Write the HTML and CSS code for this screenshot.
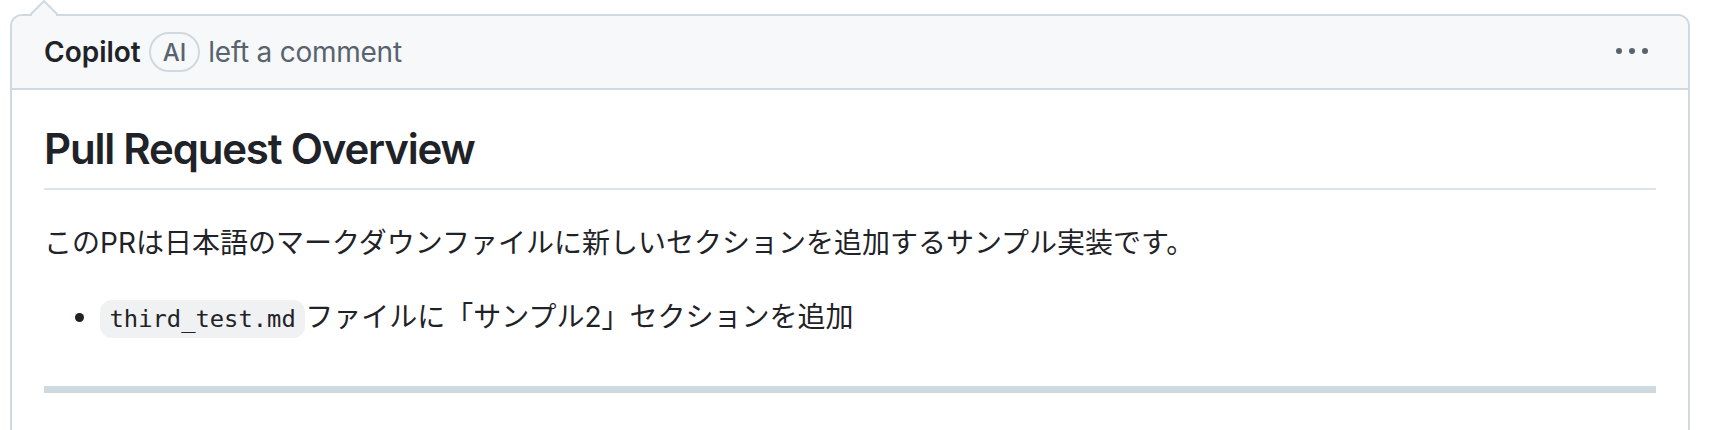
FILE: index.html
```html
<!DOCTYPE html>
<html lang="ja">
<head>
<meta charset="utf-8">
<title>Copilot comment</title>
<link rel="stylesheet" href="styles.css">
</head>
<body>
<div class="timeline">
  <div class="comment">
    <svg class="caret" width="28" height="18" viewBox="0 0 28 18" aria-hidden="true">
      <rect x="2" y="14" width="24" height="4" fill="#f6f8fa"/>
      <path d="M0 15 L14 1 L28 15" fill="#f6f8fa" stroke="#d1d9e0" stroke-width="2"/>
    </svg>
    <div class="comment-header">
      <div class="author-line">
        <strong class="author">Copilot</strong>
        <span class="label">AI</span>
        <span class="action">left a comment</span>
      </div>
      <button class="kebab" type="button" aria-label="Show options">
        <svg width="32" height="32" viewBox="0 0 16 16" aria-hidden="true"><path d="M8 9a1.5 1.5 0 1 0 0-3 1.5 1.5 0 0 0 0 3ZM1.5 9a1.5 1.5 0 1 0 0-3 1.5 1.5 0 0 0 0 3Zm13 0a1.5 1.5 0 1 0 0-3 1.5 1.5 0 0 0 0 3Z"/></svg>
      </button>
    </div>
    <div class="comment-body">
      <h2>Pull Request Overview</h2>
      <p>このPRは日本語のマークダウンファイルに新しいセクションを追加するサンプル実装です。</p>
      <ul>
        <li><code>third_test.md</code>ファイルに「サンプル2」セクションを追加</li>
      </ul>
      <hr>
    </div>
  </div>
</div>
</body>
</html>
```

FILE: styles.css
```css
html, body {
  margin: 0;
  background: #ffffff;
}

.timeline {
  height: 430px;
  overflow: hidden;
  box-sizing: border-box;
  padding: 14px 34px 0 10px;
  font-family: Inter, "Noto Sans CJK JP", sans-serif;
  color: #1f2328;
}

.comment {
  position: relative;
  border: 2px solid #d1d9e0;
  border-radius: 12px;
  background: #ffffff;
  min-height: 480px;
}

.caret {
  position: absolute;
  left: 18px;
  top: -16px;
  display: block;
}

.comment-header {
  display: flex;
  align-items: center;
  height: 72px;
  padding: 0 40px 0 32px;
  background: #f6f8fa;
  border-bottom: 2px solid #d1d9e0;
  border-radius: 10px 10px 0 0;
  font-size: 28px;
}

.author-line {
  flex: 1;
  display: flex;
  align-items: center;
}

.author {
  font-weight: 600;
  color: #1f2328;
}

.label {
  display: inline-flex;
  align-items: center;
  box-sizing: border-box;
  height: 40px;
  margin: 0 8px 0 8px;
  padding: 0 12px;
  border: 2px solid #d1d9e0;
  border-radius: 999px;
  font-size: 24px;
  font-weight: 500;
  color: #59636e;
}

.action {
  color: #59636e;
  letter-spacing: -0.25px;
}

.kebab {
  display: flex;
  padding: 0;
  margin: 0;
  border: 0;
  background: transparent;
  fill: #59636e;
}

.comment-body {
  padding: 33px 32px 32px;
  font-size: 28px;
  line-height: 1.5;
}

.comment-body h2 {
  margin: 0 0 32px;
  padding-bottom: 12.6px;
  font-size: 42px;
  font-weight: 600;
  line-height: 1.25;
  letter-spacing: -1.2px;
  border-bottom: 2px solid rgba(209, 217, 224, 0.7);
}

.comment-body p {
  margin: 0 0 32px;
}

.comment-body ul {
  margin: 0 0 32px;
  padding-left: 56px;
}

.comment-body code {
  font-family: "DejaVu Sans Mono", monospace;
  font-size: 85%;
  padding: 4.8px 9.5px;
  background: rgba(129, 139, 152, 0.12);
  border-radius: 12px;
}

.comment-body hr {
  height: 7px;
  margin: 48px 0;
  padding: 0;
  border: 0;
  background: #d1d9e0;
}
```
